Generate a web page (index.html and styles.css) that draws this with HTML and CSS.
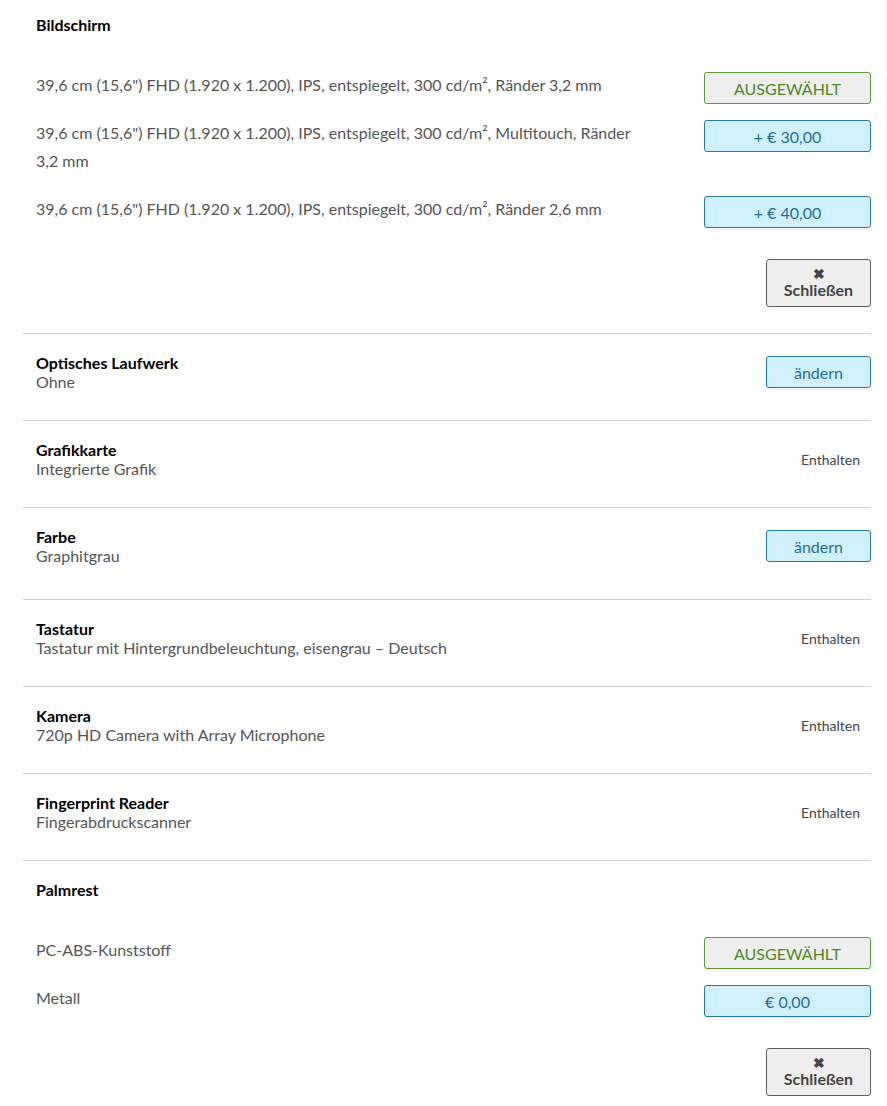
FILE: index.html
```html
<!DOCTYPE html>
<html lang="de">
<head>
<meta charset="utf-8">
<title>Konfiguration</title>
<link rel="stylesheet" href="styles.css">
</head>
<body>
<div class="edge"><span class="edge-a"></span><span class="edge-b"></span></div>
<main class="config">
  <section class="group group-open group-first">
    <h2 class="group-title">Bildschirm</h2>
    <div class="options">
      <div class="option">
        <div class="option-text">39,6 cm (15,6") FHD (1.920 x 1.200), IPS, entspiegelt, 300 cd/m², Ränder 3,2 mm</div>
        <button class="btn btn-selected">AUSGEWÄHLT</button>
      </div>
      <div class="option">
        <div class="option-text">39,6 cm (15,6") FHD (1.920 x 1.200), IPS, entspiegelt, 300 cd/m², Multitouch, Ränder 3,2 mm</div>
        <button class="btn btn-price">+ € 30,00</button>
      </div>
      <div class="option">
        <div class="option-text">39,6 cm (15,6") FHD (1.920 x 1.200), IPS, entspiegelt, 300 cd/m², Ränder 2,6 mm</div>
        <button class="btn btn-price">+ € 40,00</button>
      </div>
    </div>
    <div class="close-row">
      <button class="btn-close"><span class="close-x">✖</span><span>Schließen</span></button>
    </div>
  </section>

  <section class="group">
    <div class="group-info">
      <h2 class="group-title">Optisches Laufwerk</h2>
      <div class="group-value">Ohne</div>
    </div>
    <button class="btn btn-change">ändern</button>
  </section>

  <section class="group">
    <div class="group-info">
      <h2 class="group-title">Grafikkarte</h2>
      <div class="group-value">Integrierte Grafik</div>
    </div>
    <span class="included">Enthalten</span>
  </section>

  <section class="group group-tall">
    <div class="group-info">
      <h2 class="group-title">Farbe</h2>
      <div class="group-value">Graphitgrau</div>
    </div>
    <button class="btn btn-change">ändern</button>
  </section>

  <section class="group">
    <div class="group-info">
      <h2 class="group-title">Tastatur</h2>
      <div class="group-value">Tastatur mit Hintergrundbeleuchtung, eisengrau – Deutsch</div>
    </div>
    <span class="included">Enthalten</span>
  </section>

  <section class="group">
    <div class="group-info">
      <h2 class="group-title">Kamera</h2>
      <div class="group-value">720p HD Camera with Array Microphone</div>
    </div>
    <span class="included">Enthalten</span>
  </section>

  <section class="group">
    <div class="group-info">
      <h2 class="group-title">Fingerprint Reader</h2>
      <div class="group-value">Fingerabdruckscanner</div>
    </div>
    <span class="included">Enthalten</span>
  </section>

  <section class="group group-open">
    <h2 class="group-title">Palmrest</h2>
    <div class="options">
      <div class="option">
        <div class="option-text">PC-ABS-Kunststoff</div>
        <button class="btn btn-selected">AUSGEWÄHLT</button>
      </div>
      <div class="option">
        <div class="option-text">Metall</div>
        <button class="btn btn-price">€ 0,00</button>
      </div>
    </div>
    <div class="close-row">
      <button class="btn-close"><span class="close-x">✖</span><span>Schließen</span></button>
    </div>
  </section>
</main>
</body>
</html>
```

FILE: styles.css
```css
* { box-sizing: border-box; }

html, body {
  margin: 0;
  padding: 0;
  background: #fff;
}

body {
  font-family: Lato, "Open Sans", "Liberation Sans", sans-serif;
  color: #555;
  font-size: 16px;
  position: relative;
}

.edge {
  position: absolute;
  top: 0;
  right: 0;
  width: 1px;
  display: flex;
  flex-direction: column;
}
.edge-a {
  height: 72px;
  background: #ececec;
}
.edge-b {
  margin-top: 4px;
  height: 124px;
  background: #ececec;
}

.config {
  margin-left: 23px;
  width: 848px;
}

.group {
  border-top: 1px solid #cfcfcf;
  padding: 19px 0 29px 13px;
  display: flex;
  align-items: center;
  justify-content: space-between;
}

.group-tall {
  padding-bottom: 34px;
}

.group-open {
  display: block;
  padding-bottom: 26px;
}

.group-first {
  border-top: none;
  padding-top: 15px;
}

.group-title {
  margin: 0;
  font-size: 16px;
  line-height: 19px;
  font-weight: 700;
  color: #000;
}

.group-value {
  font-size: 16px;
  line-height: 19px;
  color: #555;
}

.included {
  font-size: 14px;
  color: #444;
  padding-right: 11px;
}

.options {
  margin-top: 37px;
}

.option {
  display: flex;
  align-items: flex-start;
  justify-content: space-between;
}

.option-text {
  flex: 1;
  line-height: 28px;
  padding-bottom: 20px;
  padding-right: 60px;
  color: #555;
}

.btn {
  font-family: inherit;
  width: 167px;
  height: 32px;
  margin-top: 1px;
  border-radius: 3px;
  font-size: 16px;
  padding: 0;
  flex-shrink: 0;
  cursor: pointer;
}

.btn-selected {
  background: #eeeeee;
  border: 1px solid #5b9a34;
  color: #4c8a26;
}

.btn-price {
  background: #d1f0ff;
  border: 1px solid #2479a8;
  color: #1f6e9c;
}

.btn-change {
  width: 105px;
  margin-top: 3px;
  align-self: flex-start;
  background: #d1f0ff;
  border: 1px solid #2479a8;
  color: #1f6e9c;
}

.close-row {
  display: flex;
  justify-content: flex-end;
  margin-top: 16px;
}

.btn-close {
  font-family: inherit;
  width: 105px;
  height: 48px;
  background: #eeeeee;
  border: 1px solid #5e5e5e;
  border-radius: 3px;
  color: #444;
  font-weight: 700;
  font-size: 16px;
  line-height: 17px;
  padding: 0 0 1px;
  display: flex;
  flex-direction: column;
  align-items: center;
  justify-content: center;
  cursor: pointer;
}

.close-x {
  font-size: 14px;
  line-height: 14px;
  color: #444;
}
```
